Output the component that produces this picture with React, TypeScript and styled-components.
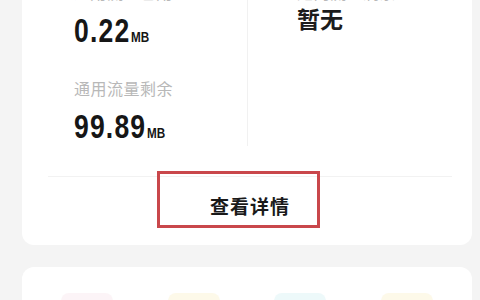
import React from "react";
import styled, { createGlobalStyle } from "styled-components";

const Global = createGlobalStyle`
  html, body { margin: 0; padding: 0; background: #f4f4f4; }
  body { font-family: "Noto Sans CJK SC", "Noto Sans", sans-serif; overflow: hidden; }
`;

const Page = styled.div`
  width: 480px;
  height: 300px;
  overflow: hidden;
  background: #f4f4f4;
  box-sizing: border-box;
  padding: 0 8px 0 22px;
`;

const Stack = styled.div`
  display: flex;
  flex-direction: column;
  gap: 22px;
  margin-top: -40px;
`;

const Card = styled.div<{ $pad?: string }>`
  position: relative;
  background: #ffffff;
  border-radius: 12px;
  padding: ${(p) => p.$pad || "21px 0 10px"};
`;

const StatGrid = styled.div`
  display: grid;
  grid-template-columns: 226px 1fr;
  align-items: start;
  padding-bottom: 30px;
`;

const Column = styled.div<{ $left?: boolean }>`
  display: flex;
  flex-direction: column;
  gap: 27px;
  padding-left: ${(p) => (p.$left ? "52px" : "49px")};
  border-right: ${(p) => (p.$left ? "1px solid #f1f1f1" : "none")};
`;

const Stat = styled.div`
  display: flex;
  flex-direction: column;
  gap: 7px;
`;

const Label = styled.div`
  font-size: 16px;
  line-height: 22px;
  color: #b8b8b8;
  letter-spacing: 0.5px;
`;

const Value = styled.div`
  font-family: "Liberation Sans", Arial, sans-serif;
  font-weight: 700;
  font-size: 34px;
  line-height: 40px;
  height: 40px;
  color: #161616;
  letter-spacing: 1.5px;
  transform: scaleX(0.78);
  transform-origin: left center;
  white-space: nowrap;
`;

const Unit = styled.span`
  font-size: 15px;
  line-height: 1;
  letter-spacing: 0;
  margin-left: 1px;
`;

const TextValue = styled.div`
  font-size: 23px;
  font-weight: 700;
  line-height: 24px;
  color: #1c1c1c;
  margin-top: -4px;
`;

const Divider = styled.div`
  height: 1px;
  background: #f2f2f2;
  margin: 0 20px 0 26px;
`;

const DetailRow = styled.div`
  position: relative;
  display: flex;
  justify-content: center;
  padding-left: 6px;
`;

const DetailButton = styled.div`
  font-size: 19px;
  font-weight: 700;
  line-height: 58px;
  color: #1a1a1a;
  letter-spacing: 1px;
`;

const Mark = styled.div`
  position: absolute;
  left: 135px;
  top: -6px;
  width: 163px;
  height: 57px;
  box-sizing: border-box;
  border: 3px solid #c9474b;
`;

const IconRow = styled.div`
  display: grid;
  grid-template-columns: repeat(4, 1fr);
  padding: 0 12px;
`;

const IconCell = styled.div`
  display: flex;
  justify-content: center;
  opacity: 0.18;
`;

const icons = [
  { a: "#9fd0f5", b: "#f2c8d4" },
  { a: "#8fdde8", b: "#f7df8a" },
  { a: "#f5e27a", b: "#9fe0e8" },
  { a: "#f7b8c8", b: "#f7e08a" },
];

export default function App() {
  return (
    <>
      <Global />
      <Page>
        <Stack>
          <Card>
            <StatGrid>
              <Column $left>
                <Stat>
                  <Label>通用流量已用</Label>
                  <Value>
                    0.22<Unit>MB</Unit>
                  </Value>
                </Stat>
                <Stat>
                  <Label>通用流量剩余</Label>
                  <Value>
                    99.89<Unit>MB</Unit>
                  </Value>
                </Stat>
              </Column>
              <Column>
                <Stat>
                  <Label>定向流量剩余</Label>
                  <TextValue>暂无</TextValue>
                </Stat>
              </Column>
            </StatGrid>
            <Divider />
            <DetailRow>
              <DetailButton>查看详情</DetailButton>
              <Mark />
            </DetailRow>
          </Card>
          <Card $pad="24px 0 20px">
            <IconRow>
              {icons.map((c, i) => (
                <IconCell key={i}>
                  <svg width="60" height="40" viewBox="0 0 60 40">
                    <rect x="4" y="2" width="52" height="32" rx="8" fill={c.b} />
                    <circle cx="30" cy="18" r="9" fill={c.a} />
                  </svg>
                </IconCell>
              ))}
            </IconRow>
          </Card>
        </Stack>
      </Page>
    </>
  );
}
